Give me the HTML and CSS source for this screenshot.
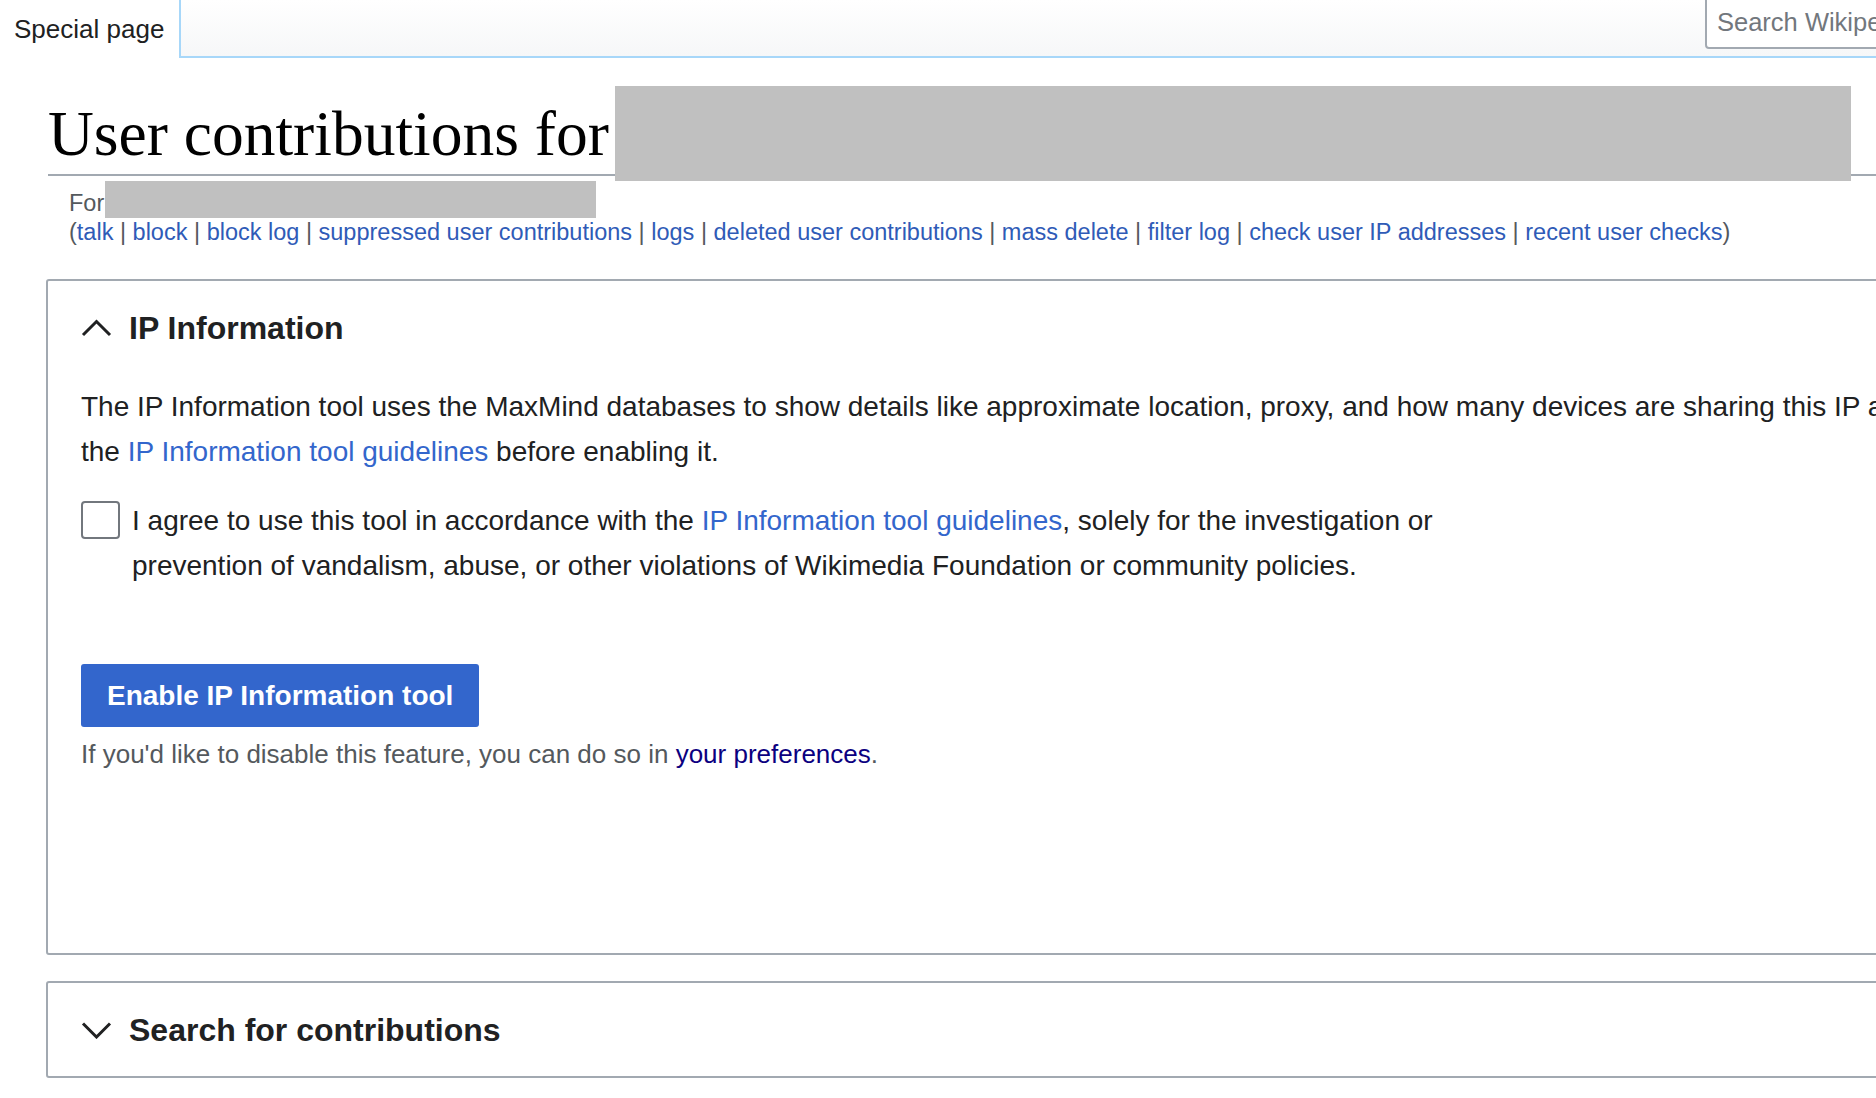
FILE: index.html
```html
<!DOCTYPE html>
<html lang="en">
<head>
<meta charset="utf-8">
<title>User contributions</title>
<link rel="stylesheet" href="styles.css">
</head>
<body>
<div class="page">
  <header class="header">
    <div class="tab-selected">Special page</div>
    <div class="tab-bar">
      <div class="search">Search Wikipedia</div>
    </div>
  </header>

  <main class="content">
    <h1 class="title">User contributions for <span class="redact redact-title"></span></h1>

    <div class="subtitle">
      <div class="for-line">For<span class="redact redact-for"></span></div>
      <div class="tool-links">(<a href="#">talk</a><span class="sep"> | </span><a href="#">block</a><span class="sep"> | </span><a href="#">block log</a><span class="sep"> | </span><a href="#">suppressed user contributions</a><span class="sep"> | </span><a href="#">logs</a><span class="sep"> | </span><a href="#">deleted user contributions</a><span class="sep"> | </span><a href="#">mass delete</a><span class="sep"> | </span><a href="#">filter log</a><span class="sep"> | </span><a href="#">check user IP addresses</a><span class="sep"> | </span><a href="#">recent user checks</a>)</div>
    </div>

    <section class="panel panel-open">
      <h2 class="panel-heading">
        <svg class="chevron" width="31" height="18" viewBox="0 0 31 18"><polyline points="2,16 15.5,2.5 29,16" fill="none" stroke="#202122" stroke-width="3"/></svg>
        <span>IP Information</span>
      </h2>
      <p class="panel-text">The IP Information tool uses the MaxMind databases to show details like approximate location, proxy, and how many devices are sharing this IP address. Please read<br>the <a href="#">IP Information tool guidelines</a> before enabling it.</p>
      <label class="agree">
        <span class="checkbox"></span>
        <span class="agree-text">I agree to use this tool in accordance with the <a href="#">IP Information tool guidelines</a>, solely for the investigation or prevention of vandalism, abuse, or other violations of Wikimedia Foundation or community policies.</span>
      </label>
      <button class="enable-btn" type="button">Enable IP Information tool</button>
      <p class="disable-note">If you'd like to disable this feature, you can do so in <a href="#" class="visited">your preferences</a>.</p>
    </section>

    <section class="panel panel-closed">
      <h2 class="panel-heading">
        <svg class="chevron" width="31" height="18" viewBox="0 0 31 18"><polyline points="2,2.5 15.5,16 29,2.5" fill="none" stroke="#202122" stroke-width="3"/></svg>
        <span>Search for contributions</span>
      </h2>
    </section>
  </main>
</div>
</body>
</html>
```

FILE: styles.css
```css
html, body {
  margin: 0;
  padding: 0;
  overflow: hidden;
  background: #ffffff;
}

body {
  font-family: "Liberation Sans", Arial, sans-serif;
  color: #202122;
}

.page {
  width: 2200px;
}

a {
  color: #3366cc;
  text-decoration: none;
}

/* Header */
.header {
  display: flex;
  height: 58px;
}

.tab-selected {
  width: 165px;
  padding-left: 14px;
  font-size: 26px;
  line-height: 58px;
  height: 56px;
  color: #202122;
  background: #ffffff;
}

.tab-bar {
  flex: 1;
  display: flex;
  justify-content: flex-end;
  align-items: flex-start;
  background: linear-gradient(to bottom, #ffffff 0%, #f6f7f8 100%);
  border-left: 2px solid #a7d7f9;
  border-bottom: 2px solid #a7d7f9;
  height: 56px;
}

.search {
  width: 440px;
  margin-right: 55px;
  height: 53px;
  margin-top: -4px;
  box-sizing: border-box;
  border: 2px solid #a2a9b1;
  border-radius: 4px;
  background: #ffffff;
  padding-left: 10px;
  font-size: 25.5px;
  line-height: 48px;
  color: #72777d;
}

/* Content */
.content {
  margin-left: 48px;
  width: 2100px;
}

.title {
  position: relative;
  margin: 35px 0 0 0;
  font-family: "Liberation Serif", "Times New Roman", serif;
  font-weight: normal;
  font-size: 63.5px;
  line-height: 81px;
  color: #000000;
  border-bottom: 2px solid #a2a9b1;
}

.redact {
  background: #c0c0c0;
}

.redact-title {
  position: absolute;
  left: 567px;
  top: -7px;
  width: 1236px;
  height: 95px;
}

.subtitle {
  margin: 13px 0 0 21px;
  font-size: 23.5px;
  line-height: 29px;
  color: #54595d;
}

.for-line {
  display: flex;
  align-items: flex-start;
  height: 29px;
}

.redact-for {
  display: block;
  width: 491px;
  height: 37px;
  margin-top: -8px;
  margin-left: 1px;
}

.tool-links a {
  color: #2f5bb7;
}

.sep {
  color: #54595d;
}

/* Panels */
.panel {
  border: 2px solid #a2a9b1;
  border-radius: 3px;
  padding: 0 33px;
  margin-left: -2px;
}

.panel-open {
  margin-top: 32px;
  padding-top: 27px;
  padding-bottom: 181px;
}

.panel-closed {
  margin-top: 26px;
  padding-top: 27px;
  padding-bottom: 26px;
}

.panel-heading {
  display: flex;
  align-items: center;
  gap: 17px;
  margin: 0;
  font-size: 32px;
  line-height: 40px;
  font-weight: bold;
  color: #202122;
}

.chevron {
  display: block;
  flex: none;
}

.panel-text {
  margin: 36px 0 0 0;
  font-size: 28px;
  line-height: 45px;
  white-space: nowrap;
}

.agree {
  display: flex;
  align-items: flex-start;
  gap: 12px;
  margin-top: 24px;
  font-size: 28px;
  line-height: 45px;
}

.checkbox {
  flex: none;
  width: 39px;
  height: 38px;
  margin-top: 3px;
  box-sizing: border-box;
  border: 2px solid #72777d;
  border-radius: 4px;
  background: #ffffff;
}

.agree-text {
  max-width: 1370px;
}

.enable-btn {
  display: block;
  margin-top: 76px;
  height: 63px;
  padding: 0 26px;
  border: none;
  border-radius: 3px;
  background: #3366cc;
  color: #ffffff;
  font-family: "Liberation Sans", Arial, sans-serif;
  font-size: 28px;
  font-weight: bold;
}

.disable-note {
  margin: 9px 0 0 0;
  font-size: 26px;
  line-height: 36px;
  color: #54595d;
}

.disable-note a.visited {
  color: #0b0080;
}
```
